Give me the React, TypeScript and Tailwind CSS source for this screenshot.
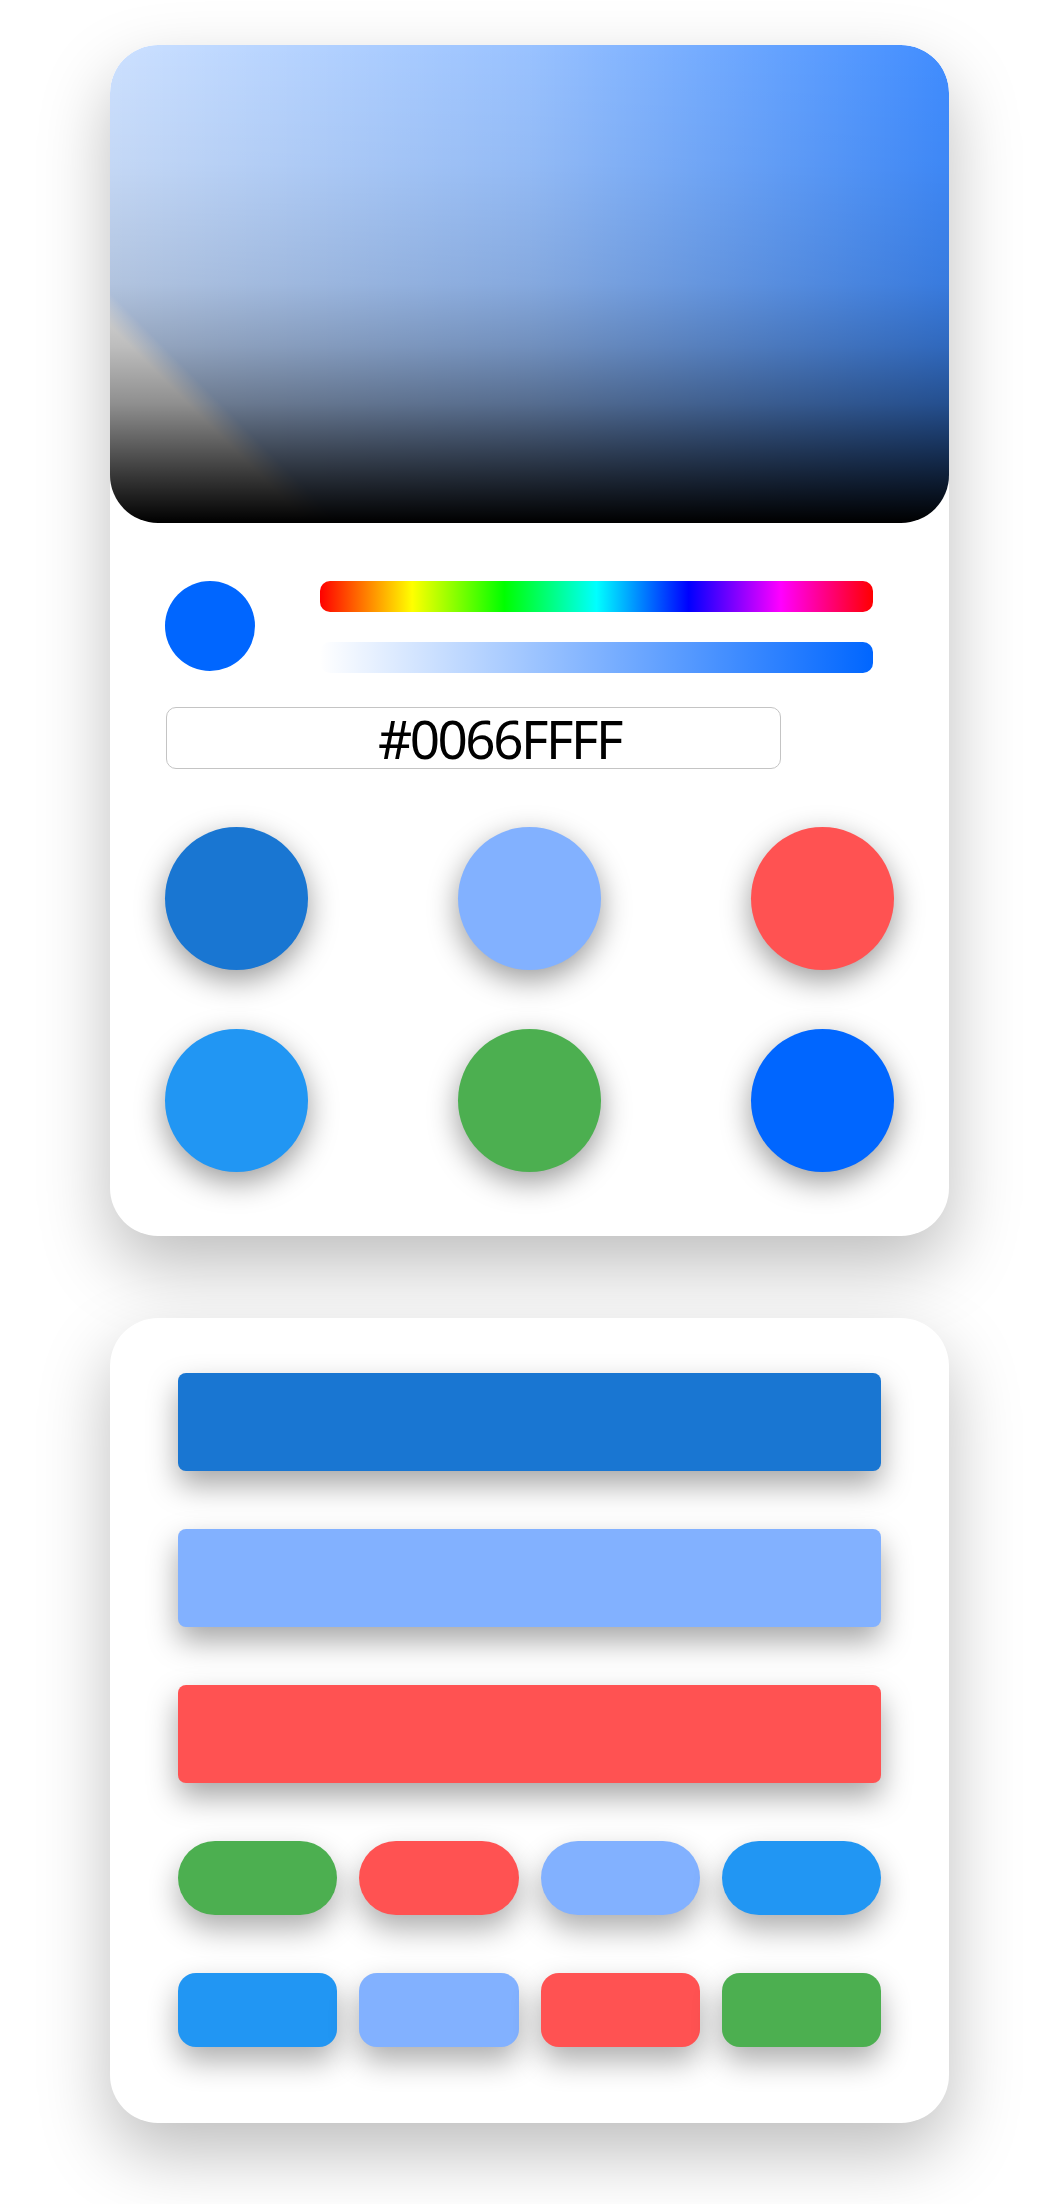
import React from 'react';

const swatches = ['#1976D2', '#82B1FF', '#FF5252', '#2196F3', '#4CAF50', '#0066FF'];
const bars = ['#1976D2', '#82B1FF', '#FF5252'];
const pills = ['#4CAF50', '#FF5252', '#82B1FF', '#2196F3'];
const tiles = ['#2196F3', '#82B1FF', '#FF5252', '#4CAF50'];

const ColorPicker: React.FC = () => {
  return (
    <div className="ml-[110px] mt-[45px] w-[839px] overflow-hidden rounded-[48px] bg-white shadow-[0_30px_70px_rgba(0,0,0,0.26)]">
      {/* Saturation / value area */}
      <div className="h-[478px] rounded-[48px] bg-[#0066ff] bg-[image:linear-gradient(to_bottom,rgba(0,0,0,0)_0%,rgba(0,0,0,0.04)_25%,rgba(0,0,0,0.13)_50%,rgba(0,0,0,0.26)_63%,rgba(0,0,0,0.44)_75%,rgba(0,0,0,0.78)_90%,#000_100%),linear-gradient(45deg,#fff_0%,#fff_15%,rgba(255,255,255,0)_17.5%),linear-gradient(to_right,rgba(255,255,255,0.8)_0%,rgba(255,255,255,0.6)_50%,rgba(255,255,255,0.25)_100%)]" />

      <div className="px-[55px] pt-[58px] pb-[64px]">
        {/* Preview + sliders */}
        <div className="flex items-start">
          <div className="h-[90px] w-[90px] shrink-0 rounded-full bg-[#0066FF]" />
          <div className="ml-[65px] flex w-[553px] flex-col gap-[30px]">
            <div className="h-[31px] rounded-[10px] bg-[linear-gradient(to_right,#f00_0%,#ff0_16.67%,#0f0_33.33%,#0ff_50%,#00f_66.67%,#f0f_83.33%,#f00_100%)]" />
            <div className="h-[31px] rounded-[10px] bg-[linear-gradient(to_right,rgba(0,102,255,0)_0%,#0066ff_100%)]" />
          </div>
        </div>

        {/* Hex input */}
        <div className="mt-[34px] ml-px flex h-[62px] w-[615px] items-center justify-center rounded-[10px] border border-[#c4c4c4] pl-[52px] font-['Noto_Sans',sans-serif] text-[53px] font-normal leading-none tracking-[-2.5px] text-black">
          #0066FFFF
        </div>

        {/* Swatches */}
        <div className="mt-[58px] grid grid-cols-3 gap-y-[59px]">
          {swatches.map((c, i) => (
            <div
              key={i}
              className={`h-[143px] w-[143px] rounded-full shadow-[0_10px_30px_rgba(0,0,0,0.4)] ${i % 3 === 0 ? 'justify-self-start' : i % 3 === 1 ? 'justify-self-center' : 'justify-self-end'}`}
              style={{ backgroundColor: c }}
            />
          ))}
        </div>
      </div>
    </div>
  );
};

const ButtonsCard: React.FC = () => {
  return (
    <div className="ml-[110px] mt-[82px] flex w-[839px] flex-col gap-[58px] rounded-[48px] bg-white px-[68px] pt-[55px] pb-[76px] shadow-[0_30px_70px_rgba(0,0,0,0.26)]">
      {bars.map((c) => (
        <div key={c} className="h-[98px] rounded-[8px] shadow-[0_14px_30px_rgba(0,0,0,0.35)]" style={{ backgroundColor: c }} />
      ))}
      <div className="grid grid-cols-4 gap-[22px]">
        {pills.map((c) => (
          <div key={c} className="h-[74px] rounded-full shadow-[0_14px_30px_rgba(0,0,0,0.32)]" style={{ backgroundColor: c }} />
        ))}
      </div>
      <div className="grid grid-cols-4 gap-[22px]">
        {tiles.map((c) => (
          <div key={c} className="h-[74px] rounded-[18px] shadow-[0_14px_30px_rgba(0,0,0,0.32)]" style={{ backgroundColor: c }} />
        ))}
      </div>
    </div>
  );
};

export default function App() {
  return (
    <div className="min-h-[2204px] bg-white pb-[81px]">
      <ColorPicker />
      <ButtonsCard />
    </div>
  );
}
